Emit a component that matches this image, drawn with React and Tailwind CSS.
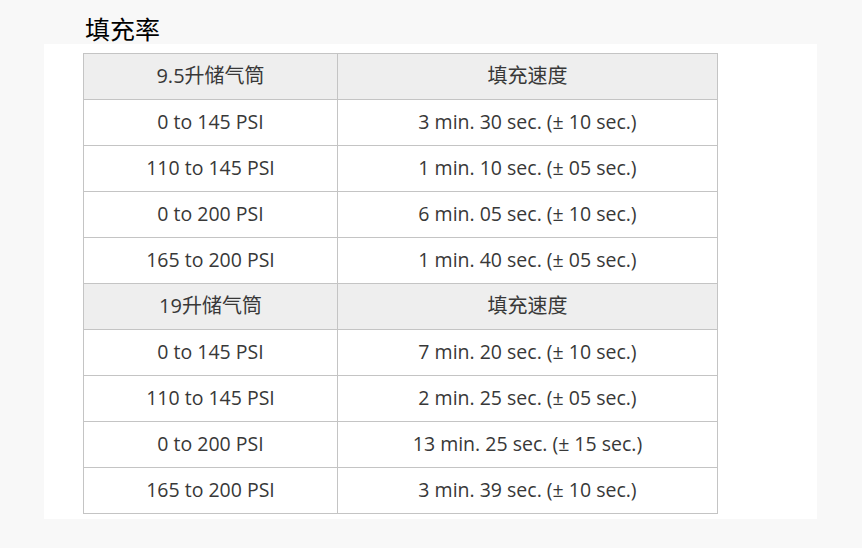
import React from 'react';

const groups = [
  {
    title: '9.5升储气筒',
    rows: [
      ['0 to 145 PSI', '3 min. 30 sec. (± 10 sec.)'],
      ['110 to 145 PSI', '1 min. 10 sec. (± 05 sec.)'],
      ['0 to 200 PSI', '6 min. 05 sec. (± 10 sec.)'],
      ['165 to 200 PSI', '1 min. 40 sec. (± 05 sec.)'],
    ],
  },
  {
    title: '19升储气筒',
    rows: [
      ['0 to 145 PSI', '7 min. 20 sec. (± 10 sec.)'],
      ['110 to 145 PSI', '2 min. 25 sec. (± 05 sec.)'],
      ['0 to 200 PSI', '13 min. 25 sec. (± 15 sec.)'],
      ['165 to 200 PSI', '3 min. 39 sec. (± 10 sec.)'],
    ],
  },
];

const font = { fontFamily: '"Open Sans", "Noto Sans CJK SC", sans-serif' };

const App = () => {
  return (
    <div className="w-[862px] h-[548px] bg-[#f8f8f8]" style={font}>
      <div className="h-[44px] pl-[85px] pt-[14px]">
        <h2 className="text-[25px] leading-[30px] text-black">填充率</h2>
      </div>
      <div className="ml-[44px] w-[773px] bg-white pt-[9px] pb-[5px] pl-[39px]">
        <table className="w-[635px] border-collapse text-[19.5px] text-[#383838]">
          <tbody>
            {groups.map((g) => (
              <React.Fragment key={g.title}>
                <tr className="h-[46px] bg-[#eeeeee] text-[20px]">
                  <td className="w-[254px] border border-[#c4c4c4] pb-[2px] text-center">{g.title}</td>
                  <td className="border border-[#c4c4c4] pb-[2px] text-center">填充速度</td>
                </tr>
                {g.rows.map((r, i) => (
                  <tr key={i} className="h-[46px]">
                    <td className="border border-[#c4c4c4] pb-[2px] text-center">{r[0]}</td>
                    <td className="border border-[#c4c4c4] pb-[2px] text-center">{r[1]}</td>
                  </tr>
                ))}
              </React.Fragment>
            ))}
          </tbody>
        </table>
      </div>
    </div>
  );
};

export default App;
